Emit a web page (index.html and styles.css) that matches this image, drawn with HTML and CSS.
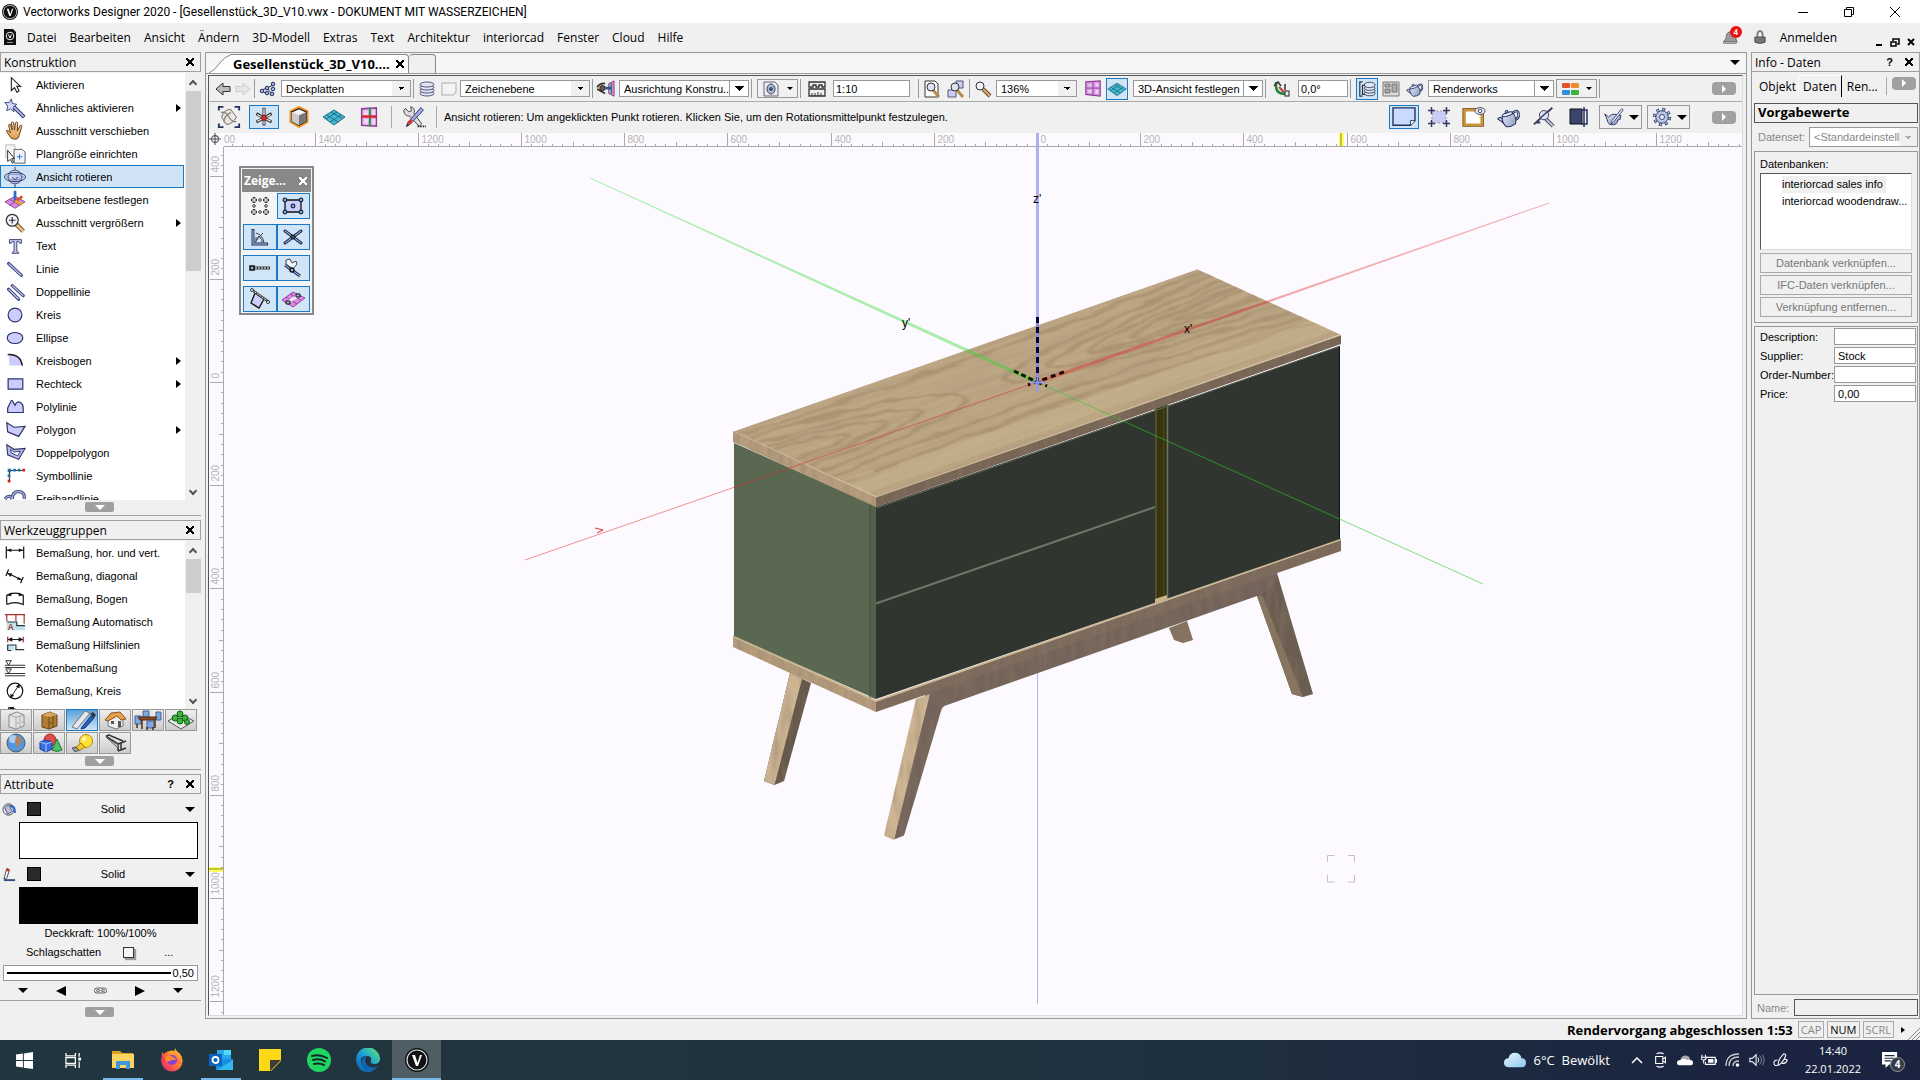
FILE: index.html
```html
<!DOCTYPE html>
<html lang="de">

	<head>
		<meta charset="UTF-8">
		<title>Vectorworks Designer 2020</title>
		<link rel="stylesheet" href="styles.css">
	</head>

	<body>

		<svg class="sprite" width="0" height="0" aria-hidden="true">
			<defs>
				<linearGradient id="gLav" x1="0" y1="0" x2="1" y2="1"><stop offset="0" stop-color="#eef" /><stop offset="1" stop-color="#a9aee0" /></linearGradient>
				<linearGradient id="gSteel" x1="0" y1="0" x2="1" y2="1"><stop offset="0" stop-color="#e2e8f8" /><stop offset="1" stop-color="#8c9ac0" /></linearGradient>
				<linearGradient id="gHand" x1="0" y1="0" x2="0" y2="1"><stop offset="0" stop-color="#fbd9a8" /><stop offset="1" stop-color="#dd9a50" /></linearGradient>
				<linearGradient id="gFox" x1="1" y1="0" x2="0" y2="1"><stop offset="0" stop-color="#ffe226" /><stop offset=".5" stop-color="#ff7139" /><stop offset="1" stop-color="#e8187c" /></linearGradient>
				<linearGradient id="gEdge" x1="0" y1="1" x2="1" y2="0"><stop offset="0" stop-color="#0c59a4" /><stop offset=".5" stop-color="#1ba0d8" /><stop offset="1" stop-color="#66eb6e" /></linearGradient>
				<linearGradient id="gCloud" x1="0" y1="0" x2="1" y2="1"><stop offset="0" stop-color="#e8f6ff" /><stop offset="1" stop-color="#8cc8ee" /></linearGradient>
			</defs>

			<!-- tool palette -->
			<symbol id="arrow" viewBox="0 0 24 24"><path d="M8 4v14l3.500-3 2.500 5 2.500-1.500-2.500-5h4z" fill="#fff" stroke="#222" stroke-width="1.200" /></symbol>
			<symbol id="wand" viewBox="0 0 24 24"><path d="M10 10l12 12" stroke="#24305e" stroke-width="4" /><path d="M10 10l11.500 11.500" stroke="#b6bdf0" stroke-width="2" /><path d="M8 2l1 5 5 1-4 3 1 5-4-3-4 2 1-5-3-4h5z" fill="#d5d8ff" stroke="#3a4478" /></symbol>
			<symbol id="hand" viewBox="0 0 24 24"><path d="M8 20l-5-7q-1-2 1-2l3 3-2-8q0-2 2-1l2 6-1-8q1-2 2.500 0l1 8 1-8q1-2 2.500 0l-.5 9 3-6q2-1 2 1l-3 10q-1 6-8.500 3z" fill="url(#gHand)" stroke="#5a3a16" /></symbol>
			<symbol id="plan" viewBox="0 0 24 24"><path d="M2 2h10v14H2z" fill="#f4f4f4" stroke="#bbb" /><path d="M11 7h9l3 3v12H11z" fill="#f0f4ff" stroke="#555" /><path d="M17 12v6M14 15h6" stroke="#1a6fd8" /><path d="M4 8v12l3-2 2 4 1.500-1-2-4h3z" fill="#fff" stroke="#222" /></symbol>
			<symbol id="orbit" viewBox="0 0 24 24"><circle cx="12" cy="12" r="7.500" fill="url(#gLav)" stroke="#3a4478" /><ellipse cx="12" cy="12" rx="11.500" ry="5" fill="none" stroke="#24305e" /><ellipse cx="12" cy="12" rx="9" ry="3" fill="none" stroke="#7d88c0" /><path d="M12 20v4M12 1v3M9 12l3 3 3-3" stroke="#24305e" fill="none" /></symbol>
			<symbol id="workplane" viewBox="0 0 24 24"><path d="M1 14l11-6 11 6-11 7z" fill="#d98be0" stroke="#8a3d94" /><path d="M6 11l11 7M17 11L6 18" stroke="#8a3d94" /><path d="M12 2v12" stroke="#2f6bc8" stroke-width="3" /><path d="M12 14l8-6" stroke="#d05a2a" stroke-width="3" /><path d="M12 13l8 4" stroke="#d8a23a" stroke-width="3" /></symbol>
			<symbol id="zoomin" viewBox="0 0 24 24"><path d="M13 13l8 8" stroke="#6b4a24" stroke-width="5" /><path d="M13 13l8 8" stroke="#e3bd86" stroke-width="3" /><circle cx="9" cy="9" r="6.500" fill="#eef0fa" stroke="#333" stroke-width="1.300" /><path d="M9 5.500v7M5.500 9h7" stroke="#333" stroke-width="1.300" /></symbol>
			<symbol id="texticon" viewBox="0 0 24 24"><path d="M6 5h13v4h-2l-1-2h-2v11l2 1v1H9v-1l2-1V7H9L8 9H6z" fill="#ccf" stroke="#333a66" /></symbol>
			<symbol id="line" viewBox="0 0 24 24"><path d="M5 6l14 13" stroke="#3f4878" stroke-width="3.500" stroke-linecap="round" /><path d="M5 6l14 13" stroke="#b4b9ee" stroke-width="1.500" /></symbol>
			<symbol id="dline" viewBox="0 0 24 24"><path d="M5 9l11 11M9 5l12 11" stroke="#3f4878" stroke-width="3.500" stroke-linecap="round" /><path d="M5 9l11 11M9 5l12 11" stroke="#b4b9ee" stroke-width="1.500" /></symbol>
			<symbol id="circle" viewBox="0 0 24 24"><circle cx="12" cy="12" r="7.500" fill="#ccf" stroke="#2c3566" stroke-width="1.300" /></symbol>
			<symbol id="ellipse" viewBox="0 0 24 24"><ellipse cx="12" cy="12" rx="8.500" ry="6" fill="#ccf" stroke="#2c3566" stroke-width="1.300" /></symbol>
			<symbol id="arc" viewBox="0 0 24 24"><path d="M5 5q13 0 15 12H6z" fill="#ccf" /><path d="M4 5q14-1 16 12" fill="none" stroke="#222" stroke-width="1.500" /></symbol>
			<symbol id="rect" viewBox="0 0 24 24"><path d="M4.500 6.500h16v11h-16z" fill="#ccf" stroke="#2c3566" stroke-width="1.300" /></symbol>
			<symbol id="polyline" viewBox="0 0 24 24"><path d="M4 18V13l4-8q1-1 2 2l2 3q2-5 6-3 3 2 3 6v5z" fill="#ccf" stroke="#2c3566" stroke-width="1.300" /></symbol>
			<symbol id="polygon" viewBox="0 0 24 24"><path d="M3 4l8 5 12-1-7 11-12-5z" fill="#ccf" stroke="#2c3566" stroke-width="1.300" /></symbol>
			<symbol id="dpolygon" viewBox="0 0 24 24"><path d="M3 3l8 5 12-1-7 12-12-5z" fill="#b4b9ee" stroke="#2c3566" stroke-width="1.200" /><path d="M7 8l4 3 7-1-3 5-7-3z" fill="#fff" stroke="#2c3566" /></symbol>
			<symbol id="symline" viewBox="0 0 24 24"><path d="M6 18V6h16" fill="none" stroke="#345" stroke-width="1.300" /><path d="M4 4h4v4H4zM10 4h3v3h-3zM15 4h3v3h-3zM4 10h3v3H4z" fill="#2a6da8" /><path d="M20 4h3v3h-3zM4 16h3v3H4z" fill="#c22" /></symbol>
			<symbol id="freehand" viewBox="0 0 24 24"><path d="M1 12q5-6 8 0M9 12q0-8 7-8t6 8" fill="none" stroke="#3f4878" stroke-width="3.500" /><path d="M1 12q5-6 8 0M9 12q0-8 7-8t6 8" fill="none" stroke="#b4b9ee" stroke-width="1.300" /></symbol>

			<!-- dimension tools -->
			<symbol id="dimh" viewBox="0 0 24 24"><path d="M2.500 5v13M21.500 5v13M3 9h18" stroke="#111" stroke-width="1.300" /><path d="M3 9l5-2v4zM21 9l-5-2v4z" fill="#111" /></symbol>
			<symbol id="dimd" viewBox="0 0 24 24"><path d="M5 5L2 12M21 13l-3 7M4 9l15 7" stroke="#111" stroke-width="1.300" /><path d="M4 9l5 0-2 4zM19 16l-5 0 2-3z" fill="#111" /></symbol>
			<symbol id="dimb" viewBox="0 0 24 24"><path d="M3 18V8q9-5 18 0v10q-9-4-18 0" fill="none" stroke="#111" stroke-width="1.300" /><path d="M3 8l5-3v4zM21 8l-5-3v4z" fill="#111" /></symbol>
			<symbol id="dima" viewBox="0 0 24 24"><path d="M3 12h11v4h9v5H3z" fill="#bfe3e8" /><path d="M1 4h22M3 4v7M13 4v7M22 4v10" stroke="#a33" stroke-width="1.300" /><path d="M3 12h11v4h9" fill="none" stroke="#234" stroke-width="1.300" /><text x="4" y="21" font-size="9" font-weight="bold" fill="#a33">A</text></symbol>
			<symbol id="dimg" viewBox="0 0 24 24"><path d="M4 12h7v6h-7z" fill="#bfe3e8" /><path d="M4 18v-6h9v5h9M4 18h4" fill="none" stroke="#234" stroke-width="1.300" /><path d="M4 3v6M21 3v6" stroke="#c33" stroke-width="1.500" /><path d="M5 6h15" stroke="#111" /><path d="M4 6l5-2.500v5zM21 6l-5-2.500v5z" fill="#111" /></symbol>
			<symbol id="dimk" viewBox="0 0 24 24"><path d="M1 9h22M1 11.500h22M1 18h22M1 20.500h22" stroke="#222" /><path d="M2 4h6L5 9zM2 13h6l-3 5z" fill="#fff" stroke="#222" /></symbol>
			<symbol id="dimc" viewBox="0 0 24 24"><circle cx="12" cy="12" r="8.500" fill="none" stroke="#111" stroke-width="1.300" /><path d="M8 18l8-12" stroke="#111" /><path d="M17 4l0 5-4-2zM7 20l0-5 4 2z" fill="#111" /></symbol>
			<symbol id="dimw" viewBox="0 0 24 24"><path d="M5 5v16M6 5q12 2 16 12" fill="none" stroke="#111" stroke-width="1.300" /><path d="M5 5l6-1-2 4z" fill="#111" /></symbol>

			<!-- tool group buttons -->
			<symbol id="cab1" viewBox="0 0 28 20"><path d="M7 5l8-3 7 3v11l-8 3-7-2z" fill="#e4e4e4" stroke="#888" /><path d="M14 7l8-2M14 7v12M7 5l7 2M18 6v12M16 12v2M20 11v2" stroke="#aaa" fill="none" /></symbol>
			<symbol id="cab2" viewBox="0 0 28 20"><path d="M7 5l8-3 7 3v11l-8 3-7-2z" fill="#b07c34" stroke="#6a4514" /><path d="M7 5l8-3 7 3-8 2z" fill="#d6a860" /><path d="M14 7v12M18 6v12M16 12v2" stroke="#6a4514" /></symbol>
			<symbol id="ruler" viewBox="0 0 28 20"><path d="M4 17L17 1l5 2L9 19z" fill="#e4e8ec" stroke="#777" /><path d="M14 17l9-11 3 2-9 10-4 1z" fill="#2d5fc0" stroke="#1a3570" /><path d="M22 4l3-2 3 3-2 3z" fill="#334" /></symbol>
			<symbol id="house" viewBox="0 0 28 20"><path d="M7 9v7l8 3 7-3V8l-7-5z" fill="#eee" stroke="#777" /><path d="M4 10l6-7 9-1 6 7-5 1-4-4-9 5z" fill="#e8a04c" stroke="#8a5520" /><path d="M17 11h3v6h-3zM10 11h3v3h-3z" fill="#555" /></symbol>
			<symbol id="table" viewBox="0 0 28 20"><path d="M9 1h6v6H9zM22 2h5v8h-5zM1 6h6v8H1zM13 11h7v7h-7z" fill="#7fa8e0" stroke="#3c64a0" /><path d="M4 7h19l-2 3H6z" fill="#8a4b28" stroke="#552a10" /><path d="M8 10v9M21 10v8M3 14v4M13 17v3M19 17v3" stroke="#552a10" stroke-width="1.500" /></symbol>
			<symbol id="garden" viewBox="0 0 28 20"><path d="M1 11l12-7 14 7-13 8z" fill="#e6e6e6" stroke="#555" /><circle cx="13" cy="4" r="3" fill="#3cb43c" stroke="#176017" /><circle cx="8" cy="8" r="3" fill="#3cb43c" stroke="#176017" /><circle cx="18" cy="8" r="3" fill="#3cb43c" stroke="#176017" /><circle cx="13" cy="11" r="3" fill="#3cb43c" stroke="#176017" /><circle cx="20" cy="12" r="2.500" fill="#3cb43c" stroke="#176017" /></symbol>
			<symbol id="globe" viewBox="0 0 28 20"><circle cx="14" cy="10" r="9" fill="#4f97df" stroke="#555" /><circle cx="11" cy="6" r="4" fill="#cfe6ff" opacity=".7" /><path d="M14 3l5 2 1 4-3 2-1 5-2-4-1-4z" fill="#b9825a" /></symbol>
			<symbol id="shapes" viewBox="0 0 28 20"><circle cx="15" cy="7" r="6" fill="#e04a4a" stroke="#a22" /><path d="M17 17l5-11 5 11q-5 3-10 0z" fill="#4ec06a" stroke="#227a38" /><path d="M5 9l6-2 6 2v7l-6 3-6-3z" fill="#3a6ee0" stroke="#1c3c94" /><path d="M5 9l6 2 6-2M11 11v8" stroke="#9cf" fill="none" /></symbol>
			<symbol id="bulb" viewBox="0 0 28 20"><circle cx="18" cy="8" r="6.500" fill="#ffe23a" stroke="#b08a10" /><path d="M13 10l4 4-6 4-4-3z" fill="#f5c828" stroke="#a07c10" /><path d="M4 15l4-1 3 3-4 2z" fill="#999" stroke="#555" /><circle cx="16" cy="6" r="2" fill="#fff9c4" /></symbol>
			<symbol id="beam" viewBox="0 0 28 20"><path d="M5 3l12 8v7M5 3l3-1 14 6M17 11l8-3M17 18l8-3M20 10v7" fill="none" stroke="#333" stroke-width="1.500" /><path d="M5 4l12 8v3z" fill="#ddd" stroke="#555" /></symbol>

			<!-- attributes -->
			<symbol id="bucket" viewBox="0 0 16 16"><circle cx="7" cy="8" r="6" fill="#e6e6f2" stroke="#445" /><path d="M9 3q6 0 6 9l-3-1q1-5-4-6z" fill="#2f6bc8" /><path d="M3 6l4-3 4 7-5 3z" fill="#b9bfe0" stroke="#556" /></symbol>
			<symbol id="pen" viewBox="0 0 16 16"><path d="M5 2l3 1-3 9-3 1z" fill="#fff" stroke="#445" /><path d="M5 1l3 1-1 3-3-1z" fill="#c33" /><path d="M2 14h12" stroke="#334a80" stroke-width="2" /></symbol>
			<symbol id="link" viewBox="0 0 16 10"><rect x=".5" y="2" width="15" height="6" rx="3" fill="#fff" stroke="#333" /><rect x="3" y="4" width="4" height="2" rx="1" fill="none" stroke="#333" /><rect x="9" y="4" width="4" height="2" rx="1" fill="none" stroke="#333" /></symbol>

			<!-- view bar -->
			<symbol id="back" viewBox="0 0 18 18"><path d="M2 9l7-6v3.500h7v5H9V15z" fill="#bbb" stroke="#333" /></symbol>
			<symbol id="fwd" viewBox="0 0 18 18"><path d="M16 9L9 3v3.500H2v5h7V15z" fill="#e6e6e6" stroke="#ccc" /></symbol>
			<symbol id="classes" viewBox="0 0 18 18"><path d="M3 10l5-2 6-3M8 8l5 6M3 11l5 3" stroke="#24305e" /><g fill="#9fb4e0" stroke="#24305e"><circle cx="3" cy="11" r="1.800" /><circle cx="8" cy="8" r="1.800" /><circle cx="14" cy="4" r="1.800" /><circle cx="14" cy="9" r="1.800" /><circle cx="13" cy="14" r="1.800" /><circle cx="8" cy="13" r="1.800" /></g></symbol>
			<symbol id="layers" viewBox="0 0 18 18"><g fill="#dfe2f4" stroke="#333a60" stroke-width=".8"><ellipse cx="9" cy="13.500" rx="7" ry="2.500" /><ellipse cx="9" cy="10.500" rx="7" ry="2.500" /><ellipse cx="9" cy="7.500" rx="7" ry="2.500" /><ellipse cx="9" cy="4.500" rx="7" ry="2.500" /></g></symbol>
			<symbol id="sheet" viewBox="0 0 18 18"><path d="M2 3h14v9l-3 3H2z" fill="#f4f4f4" stroke="#c4c4c4" stroke-width="1.500" /></symbol>
			<symbol id="eye" viewBox="0 0 22 20"><path d="M1 8q4-5 9-4M1 10l9 5" stroke="#333" stroke-width="2" fill="none" /><circle cx="7" cy="9" r="3" fill="#7a5230" stroke="#222" /><path d="M14 4l6-3v17l-6-3z" fill="#d98be0" stroke="#8a3d94" /><path d="M17 3v13" stroke="#1b9a3a" stroke-width="1.500" /><path d="M10 9h7" stroke="#2a55a8" stroke-width="3" /></symbol>
			<symbol id="savedview" viewBox="0 0 18 18"><path d="M2 2h11l3 3v11H2z" fill="#eceef4" stroke="#667" /><ellipse cx="9" cy="9" rx="4" ry="5" fill="#a9bbd8" stroke="#445" /><circle cx="9" cy="9" r="2" fill="#456" /></symbol>
			<symbol id="scale" viewBox="0 0 18 18"><path d="M1 2h16v5h-3v-2h-3v2h-3v-2h-3v2H1zM1 9h16v7H1z" fill="#eee" stroke="#333" stroke-width="1.300" /><path d="M4 13v3M7 13v3M10 12v4M13 13v3" stroke="#333" /></symbol>
			<symbol id="zoompage" viewBox="0 0 18 18"><path d="M2 1h10l3 3v13H2z" fill="#fff" stroke="#333" /><path d="M10 10l6 7" stroke="#b98a4a" stroke-width="3" /><circle cx="8" cy="7" r="4" fill="#dde4f4" stroke="#333" /></symbol>
			<symbol id="zoomobj" viewBox="0 0 18 18"><path d="M9 1h7v7H9zM1 10h8v7H1z" fill="#ccf" stroke="#556" /><path d="M10 10l6 7" stroke="#b98a4a" stroke-width="3" /><circle cx="8" cy="7" r="4" fill="#dde4f4" stroke="#333" /></symbol>
			<symbol id="glass" viewBox="0 0 18 18"><path d="M9 9l7 7" stroke="#6b4a24" stroke-width="4" /><path d="M9 9l7 7" stroke="#d9b27a" stroke-width="2" /><circle cx="6" cy="6" r="4" fill="#eef0fa" stroke="#333" /></symbol>
			<symbol id="multiview" viewBox="0 0 18 20"><path d="M1 2l16-1v17L1 16z" fill="#dba0e4" stroke="#8a3d94" stroke-width="1.300" /><path d="M9 2v15M1 9h16" stroke="#8a3d94" /><path d="M4 5h3v2H4zM12 4h3v3h-3zM4 11h3v3H4zM12 11h3v4h-3z" fill="#f0d4f5" /></symbol>
			<symbol id="plane" viewBox="0 0 24 20"><path d="M1 10l11-7 11 7-11 8z" fill="#47b6cf" stroke="#1b6f88" /><path d="M5 8l11 7M9 5l11 6M8 15l11-7M4 12l11-7" stroke="#1b6f88" /></symbol>
			<symbol id="angle" viewBox="0 0 18 18"><path d="M3 2v4q0 8 10 8" fill="none" stroke="#1b8a3a" stroke-width="2.500" /><path d="M1 6l4-4 3 4" fill="none" stroke="#333" stroke-width="1.500" /><path d="M6 7l5 5" stroke="#c33" stroke-width="2" /><path d="M12 4v6" stroke="#333" stroke-width="1.500" /><rect x="12" y="11" width="4" height="5" fill="#eee" stroke="#222" /></symbol>
			<symbol id="stack" viewBox="0 0 20 20"><path d="M5 2H2v16h3M8 6H5v10h3" fill="none" stroke="#234" stroke-width="1.300" /><g fill="#dfe6f8" stroke="#234" stroke-width=".9"><ellipse cx="13" cy="15" rx="6" ry="2.500" /><ellipse cx="13" cy="12" rx="6" ry="2.500" /><ellipse cx="13" cy="9" rx="6" ry="2.500" /><ellipse cx="13" cy="5.500" rx="6" ry="3" /></g></symbol>
			<symbol id="panes" viewBox="0 0 18 18"><path d="M1 2h16v14H1z" fill="#ddd" stroke="#777" /><path d="M3 4h5v3H3zM3 9h5v4H3zM10 4h5v8h-5z" fill="#aaa" stroke="#777" /></symbol>
			<symbol id="teapot" viewBox="0 0 28 26"><g transform="rotate(-18 14 14)" stroke="#24305e" stroke-width="1.200"><path d="M20 10q7-3 6 3t-7 5" fill="none" stroke-width="3" /><path d="M20 10q7-3 6 3t-7 5" fill="none" stroke="#b9c6e4" stroke-width="1" /><path d="M7 19L1 11l3-1 4 4z" fill="#c9d4ee" /><path d="M7 10q6-2 13 0 3 7-1 13-6 2-11 0-4-6-1-13z" fill="url(#gSteel)" /><ellipse cx="13.500" cy="9.500" rx="6.500" ry="2" fill="#e6ebfa" /><circle cx="13.500" cy="6.500" r="1.500" fill="#c9d4ee" /></g></symbol>
			<symbol id="swatches" viewBox="0 0 18 18"><rect x="1" y="3" width="8" height="5" rx="1" fill="#e6502a" /><rect x="10" y="3" width="8" height="5" rx="1" fill="#f08a28" /><rect x="1" y="10" width="8" height="5" rx="1" fill="#2f8fe0" /><rect x="10" y="10" width="8" height="5" rx="1" fill="#3cb43c" /></symbol>

			<!-- mode bar -->
			<symbol id="rotview" viewBox="0 0 26 26"><path d="M2 6V2h5M19 2h5v4M2 20v4h5M19 24h5v-4" fill="none" stroke="#24305e" stroke-width="2" /><path d="M5 13q3-9 10-8l6 8q-4 8-11 8z" fill="#ece8dc" stroke="#666" /><path d="M4 8q6-1 9 5t8 5M7 18q2-7 8-10" fill="none" stroke="#888" stroke-width="1.500" /></symbol>
			<symbol id="rotpoint" viewBox="0 0 26 26"><path d="M13 2v21M4 19l9-5 9 5M4 9l9 5 9-5" stroke="#333" stroke-width="3.500" fill="none" /><path d="M13 3v19M5 18l8-4 8 4M5 10l8 4 8-4" stroke="#eee" stroke-width="1.500" fill="none" /><circle cx="13" cy="14" r="3" fill="#d33" stroke="#611" /></symbol>
			<symbol id="cube" viewBox="0 0 26 26"><path d="M13 3l8.500 4v11L13 23l-8.500-5V7z" fill="#fff" stroke="#f0901e" stroke-width="3.500" /><path d="M13 4l8 3.500v10L13 22l-8-4.500v-10z" fill="#f4f4f4" stroke="#222" stroke-width="1.200" /><path d="M13 11v11l8-4.500v-10z" fill="#777" /><path d="M5 7.500l8 3.500v11l-8-4.500z" fill="#ccc" /></symbol>
			<symbol id="grid" viewBox="0 0 26 26"><path d="M5 4l16-1v20l-16-1z" fill="#dba0e4" stroke="#8a3d94" stroke-width="1.500" /><path d="M7 6h5v5H7zM16 5h4v6h-4zM7 15h5v6H7zM16 15h4v6h-4z" fill="#f0d4f5" /><path d="M14 3v20" stroke="#1b9a3a" stroke-width="2" /><path d="M5 12.500h16" stroke="#e02020" stroke-width="2.500" /></symbol>
			<symbol id="prefs" viewBox="0 0 28 26"><path d="M4 3l4 4 3-1-1-5q6 1 4 8l9 12-3 3L9 12q-6 0-7-6z" fill="#ddd" stroke="#333" /><path d="M22 2l3 3L10 21l-5 3 2-5z" fill="#9fa4e0" stroke="#24305e" /><path d="M10 15l3 3-4 4-3-2z" fill="#d33" /><path d="M5 24l2-3 1 2z" fill="#111" /><path d="M18 24h10" stroke="#333" stroke-width="2" stroke-dasharray="2 1" /></symbol>
			<symbol id="page" viewBox="0 0 26 24"><path d="M1 2h24v14l-5 5H1z" fill="#ccd9ff" stroke="#24305e" stroke-width="1.500" /><path d="M25 16h-5v5" fill="#fff" stroke="#24305e" /></symbol>
			<symbol id="handles" viewBox="0 0 24 24"><path d="M5 6h14v12H5z" fill="#ccccf2" stroke="#99a" stroke-dasharray="2 2" /><path d="M4.500 2v7M1 5.500h7M19.500 2v7M16 5.500h7M4.500 15v7M1 18.500h7M19.500 15v7M16 18.500h7" stroke="#333a60" stroke-width="1.500" /></symbol>
			<symbol id="frame" viewBox="0 0 28 24"><path d="M3 4h20v17H3z" fill="#fff" stroke="#7a5010" stroke-width="5" /><path d="M3 4h20v17H3z" fill="#fff" stroke="#c8953c" stroke-width="3" /><ellipse cx="21" cy="5" rx="6" ry="4" fill="#dde4f8" stroke="#445" /><circle cx="21" cy="5" r="2" fill="#fff" stroke="#334" /></symbol>
			<symbol id="xray" viewBox="0 0 26 24"><path d="M2 20L22 2M4 18h5" stroke="#333a60" stroke-width="2" /><path d="M15 14l8 8" stroke="#333a60" stroke-width="4" /><path d="M15 14l8 8" stroke="#ccd" stroke-width="2" /><circle cx="13" cy="10" r="5" fill="#dfe4f4" stroke="#333a60" /><path d="M9 13l8-7" stroke="#333a60" stroke-width="1.500" /></symbol>
			<symbol id="clip" viewBox="0 0 22 24"><path d="M2 4h12v15H2z" fill="#3a4470" stroke="#111" /><path d="M16 2v20M13 5h6v14h-6" fill="none" stroke="#24305e" stroke-width="1.500" /></symbol>
			<symbol id="pencilpot" viewBox="0 0 28 26"><path d="M2 9l5 4q4-5 11-3l5 1-1 5-3 1q-1 6-6 6-7 1-8-7z" fill="url(#gSteel)" stroke="#24305e" stroke-width="1.200" /><path d="M24 2l2 2L13 20l-3 2 1-4z" fill="#dfe4f4" stroke="#24305e" /></symbol>
			<symbol id="gear" viewBox="0 0 24 24"><circle cx="12" cy="12" r="9" fill="none" stroke="#24305e" stroke-width="4" stroke-dasharray="3.500 3.570" /><circle cx="12" cy="12" r="9" fill="none" stroke="#b9c6e4" stroke-width="2.500" stroke-dasharray="2 5.070" stroke-dashoffset="-.7" /><circle cx="12" cy="12" r="7.500" fill="#b9c6e4" stroke="#24305e" /><circle cx="12" cy="12" r="3" fill="#eef" stroke="#24305e" /></symbol>

			<!-- snapping -->
			<symbol id="snapgrid" viewBox="0 0 24 24"><g fill="#fff" stroke="#333"><path d="M6 3v6M3 6h6M18 3v6M15 6h6M6 15v6M3 18h6M18 15v6M15 18h6" stroke-width="2.500" /><circle cx="12" cy="6" r="1.300" /><circle cx="12" cy="18" r="1.300" /><circle cx="6" cy="12" r="1.300" /><circle cx="18" cy="12" r="1.300" /></g><path d="M6 4v4M4 6h4M18 4v4M16 6h4M6 16v4M4 18h4M18 16v4M16 18h4" stroke="#fff" /></symbol>
			<symbol id="snapobj" viewBox="0 0 24 24"><path d="M4 6h16v12H4z" fill="#ccf" stroke="#111" stroke-width="1.300" /><g fill="#9fb4d0" stroke="#12304e" stroke-width="1.300"><circle cx="4" cy="6" r="1.800" /><circle cx="20" cy="6" r="1.800" /><circle cx="4" cy="18" r="1.800" /><circle cx="20" cy="18" r="1.800" /><circle cx="12" cy="12" r="1.800" /></g></symbol>
			<symbol id="snapangle" viewBox="0 0 24 24"><path d="M5 4v15h15" fill="none" stroke="#24305e" stroke-width="3" /><path d="M5 5v14h14" fill="none" stroke="#b4c4e8" /><path d="M6 18l9-10M8 8q7 2 8 10M8 15l3-4 3 4v3M8 12v5" fill="none" stroke="#445" /></symbol>
			<symbol id="snapcross" viewBox="0 0 24 24"><path d="M4 6l16 12M20 6L4 18" stroke="#24305e" stroke-width="3" stroke-linecap="round" /><path d="M4 6l16 12M20 6L4 18" stroke="#b4c4e8" /><circle cx="12" cy="12" r="2" fill="#456" stroke="#111" /></symbol>
			<symbol id="snapdist" viewBox="0 0 24 24"><path d="M6 12h16" stroke="#333" stroke-width="3" /><path d="M7 12h14" stroke="#fff" stroke-dasharray="2 1" /><rect x="2" y="10" width="4" height="4" fill="#9fb4d0" stroke="#111" stroke-width="1.500" /></symbol>
			<symbol id="snapedge" viewBox="0 0 24 24"><path d="M4 9l15 11" stroke="#24305e" stroke-width="3" /><path d="M4 9l15 11" stroke="#b4c4e8" /><path d="M5 4l4-1 2 4 4-2 1 3-4 5-7-5z" fill="#eef4fa" stroke="#444" /><circle cx="11" cy="14" r="2" fill="#9fb4d0" stroke="#111" stroke-width="1.300" /></symbol>
			<symbol id="snaptan" viewBox="0 0 24 24"><path d="M7 6l9 6-5 9-8-5z" fill="#ccf" stroke="#111" stroke-width="1.300" /><path d="M4 3l17 12" stroke="#333" stroke-width="2.500" /><path d="M4 3l17 12" stroke="#eee" stroke-dasharray="2 1" /><circle cx="4" cy="3" r="1.500" fill="#fff" stroke="#333" /><circle cx="20" cy="15" r="1.500" fill="#fff" stroke="#333" /></symbol>
			<symbol id="snapplane" viewBox="0 0 24 24"><path d="M1 13l11-8 12 6-12 9z" fill="#d98be0" stroke="#a03dac" /><path d="M5 10l11 7M9 7l11 6M6 17l12-9" stroke="#a03dac" /><path d="M7 15l10-6" stroke="#eee" stroke-width="3" /><path d="M5 14h4v3H5zM15 7h4v3h-4z" fill="#9fb4d0" stroke="#111" /></symbol>

			<!-- brand and taskbar -->
			<symbol id="vw" viewBox="0 0 24 24"><circle cx="12" cy="12" r="12" fill="#111" /><circle cx="12" cy="12" r="10" fill="none" stroke="#ddd" stroke-width="1.200" /><path d="M7 7h3l2.500 8L15 7h2l-4 11h-2z" fill="#fff" /></symbol>
			<symbol id="vwdoc" viewBox="0 0 12 16"><path d="M0 0h9l3 3v13H0z" fill="#111" /><circle cx="6" cy="7" r="3.800" fill="none" stroke="#eee" /><path d="M4.500 5.500L6 9l1.500-3.500" fill="none" stroke="#fff" /><path d="M3 13.500h6" stroke="#999" /></symbol>
			<symbol id="bell" viewBox="0 0 20 20"><path d="M3 15q3-2 3-7 1-4 5-4t5 4q0 5 2 7z" fill="#999" stroke="#666" /><path d="M3 15h14v2H3z" fill="#bbb" stroke="#777" /></symbol>
			<symbol id="lock" viewBox="0 0 14 16"><path d="M4 8V5q0-4 3-4t3 4v3" fill="none" stroke="#777" stroke-width="2" /><path d="M1 8h12v6q-6 3-12 0z" fill="#777" stroke="#444" /></symbol>
			<symbol id="win" viewBox="0 0 16 16"><path d="M0 2.300l6.500-.9v6.100H0zM7.400 1.300L16 0v7.500H7.400zM0 8.400h6.500v6.200L0 13.700zM7.400 8.400H16V16l-8.600-1.200z" fill="#fff" /></symbol>
			<symbol id="taskview" viewBox="0 0 18 16"><path d="M1 0v3h10V0M1 16v-3h10v3M1 5h10v6H1zM15 0v4M15 9v7" fill="none" stroke="#fff" stroke-width="1.300" /><path d="M14 5h3v3h-3z" fill="#fff" /></symbol>
			<symbol id="explorer" viewBox="0 0 24 24"><path d="M1 3h8l2 2h11v4H1z" fill="#e0a020" /><path d="M1 6h22v14H1z" fill="#fcd462" /><path d="M5 13h14v8h-4v-4H9v4H5z" fill="#3f96d8" /></symbol>
			<symbol id="firefox" viewBox="0 0 24 24"><circle cx="12" cy="13" r="10.500" fill="url(#gFox)" /><path d="M15 0q1 3 5 6 4 6 1 11l-8-4zM2 4l3 3 4-2-4 8-4 2z" fill="url(#gFox)" /><circle cx="12" cy="12" r="5" fill="#8a3fd8" /><path d="M5 9q4-3 8 0 3 1 3 3-4-1-6 1l-4 1z" fill="#ff8a2c" /></symbol>
			<symbol id="outlook" viewBox="0 0 24 24"><path d="M8 2h14v10H8z" fill="#28a8ea" /><path d="M15 2h7v5h-7z" fill="#50d9ff" /><path d="M7 11h17v11H7z" fill="#1490df" /><path d="M24 12v10L8 22z" fill="#35b8f1" /><path d="M0 6h13v12H0z" fill="#0a64c0" /><circle cx="6.500" cy="12" r="3" fill="none" stroke="#fff" stroke-width="1.800" /></symbol>
			<symbol id="notes" viewBox="0 0 24 24"><path d="M1 1h22v12L13 23H1z" fill="#fdd816" /><path d="M12 12h11L12 23z" fill="#3c3c3c" /></symbol>
			<symbol id="spotify" viewBox="0 0 24 24"><circle cx="12" cy="12" r="12" fill="#1ed760" /><path d="M5 8q8-2 15 2M6 12q7-2 12 1.500M7 16q5-1.500 10 1" fill="none" stroke="#16262c" stroke-width="2" stroke-linecap="round" /></symbol>
			<symbol id="edge" viewBox="0 0 24 24"><path d="M0 12A12 12 0 0 1 24 11q0 5-6 5-4 0-3-3 1-5-4-5-9 0-5 9 3 6 11 6-15 4-17-11z" fill="url(#gEdge)" /><path d="M6 17Q4 9 11 8q-4 5 1 10 5 3 10-.5Q18 24 12 24q-5-1-6-7z" fill="#1164b4" /></symbol>
			<symbol id="cloudw" viewBox="0 0 24 18"><path d="M6 17q-6 0-6-5t5-5q1-6 7-6 6 0 7 6 5 0 5 5t-5 5z" fill="url(#gCloud)" /></symbol>
			<symbol id="meet" viewBox="0 0 16 18"><path d="M2 5h8v8H2zM10 8l3-2v6l-3-2M3 2q4-2 8 0M3 16q4 2 8 0" fill="none" stroke="#fff" stroke-width="1.200" /></symbol>
			<symbol id="onedrive" viewBox="0 0 18 12"><path d="M4 9q-1-7 5-8 5 0 6 5" fill="#aaa" /><path d="M4 12q-4 0-4-3t4-3q4-3 7 0 7-1 7 3 0 3-3 3z" fill="#fff" /></symbol>
			<symbol id="battery" viewBox="0 0 18 14"><path d="M6 4h10v8H5v-3" fill="none" stroke="#fff" stroke-width="1.300" /><path d="M8 6h6v4H8zM16 6h2v4h-2z" fill="#fff" /><path d="M1 1v3M5 1v3M0 4h6q0 3-3 3t-3-3M3 7v4" fill="none" stroke="#fff" stroke-width="1.200" /></symbol>
			<symbol id="wifi" viewBox="0 0 16 16"><path d="M1 14Q1 2 14 2M4 14q0-9 10-9M8 14q0-5 6-5" fill="none" stroke="#ccc" stroke-width="1.300" /><circle cx="12.500" cy="13" r="1.800" fill="#fff" /></symbol>
			<symbol id="sound" viewBox="0 0 18 16"><path d="M1 6h3l4-4v12l-4-4H1z" fill="none" stroke="#fff" stroke-width="1.200" /><path d="M10 5q2 3 0 6" fill="none" stroke="#fff" /><path d="M12 3q4 5 0 10M15 2q4 6 0 12" fill="none" stroke="#8a92a6" /></symbol>
			<symbol id="ink" viewBox="0 0 18 18"><path d="M6 15q-1-6 6-13 3 0 2 3-3 7-8 10zM1 12q0 4 4 3M5 9q-4 0-4 4M10 13q5 0 6-4l-3-1" fill="none" stroke="#fff" stroke-width="1.200" /></symbol>
			<symbol id="note" viewBox="0 0 18 18"><path d="M0 0h17v14H8l-4 4v-4H0z" fill="#fff" /><path d="M3 4h11M3 7h11M3 10h7" stroke="#1b2640" stroke-width="1.300" /></symbol>
			<symbol id="target" viewBox="0 0 14 14"><circle cx="7" cy="7" r="4" fill="none" stroke="#555" stroke-width="1.300" /><path d="M7 0v14M0 7h14" stroke="#555" stroke-width="1.300" /></symbol>
		</svg>

		<header class="titlebar">
			<svg class="logo"><use href="#vw" /></svg>
			<h1>Vectorworks Designer 2020 - [Gesellenstück_3D_V10.vwx - DOKUMENT MIT WASSERZEICHEN]</h1>
			<div class="winbtns">
				<button aria-label="Minimieren"><svg viewBox="0 0 12 12"><path d="M1 6.500h10" stroke="#000" /></svg></button>
				<button aria-label="Wiederherstellen"><svg viewBox="0 0 12 12"><path d="M1.500 3.500h7v7h-7zM3.500 3V1.500h7v7H9" fill="none" stroke="#000" /></svg></button>
				<button aria-label="Schließen"><svg viewBox="0 0 12 12"><path d="M1 1l10 10M11 1L1 11" stroke="#000" /></svg></button>
			</div>
		</header>

		<nav class="menubar">
			<svg class="doc"><use href="#vwdoc" /></svg>
			<a href="#">Datei</a>
			<a href="#">Bearbeiten</a>
			<a href="#">Ansicht</a>
			<a href="#">Ändern</a>
			<a href="#">3D-Modell</a>
			<a href="#">Extras</a>
			<a href="#">Text</a>
			<a href="#">Architektur</a>
			<a href="#">interiorcad</a>
			<a href="#">Fenster</a>
			<a href="#">Cloud</a>
			<a href="#">Hilfe</a>
			<div class="account">
				<span class="bell"><svg><use href="#bell" /></svg><b>4</b></span>
				<svg class="lock"><use href="#lock" /></svg>
				<a href="#">Anmelden</a>
			</div>
			<div class="docbtns">
				<button aria-label="Dokument minimieren"><svg viewBox="0 0 10 10"><path d="M2 8h6" stroke="#000" stroke-width="2" /></svg></button>
				<button aria-label="Dokument wiederherstellen"><svg viewBox="0 0 10 10"><path d="M1 5h5v4H1zM3 4V2h6v5H7" fill="none" stroke="#000" stroke-width="1.500" /></svg></button>
				<button aria-label="Dokument schließen"><svg viewBox="0 0 10 10"><path d="M2 2l6 6M8 2L2 8" stroke="#000" stroke-width="2" /></svg></button>
			</div>
		</nav>

		<main class="workspace">

			<aside class="dock">
				<section class="palette grow">
					<h2>Konstruktion <button class="close" aria-label="Schließen"></button></h2>
					<div class="listbox">
						<ul>
							<li><button><svg><use href="#arrow" /></svg>Aktivieren</button></li>
							<li><button class="more"><svg><use href="#wand" /></svg>Ähnliches aktivieren</button></li>
							<li><button><svg><use href="#hand" /></svg>Ausschnitt verschieben</button></li>
							<li><button><svg><use href="#plan" /></svg>Plangröße einrichten</button></li>
							<li><button class="active"><svg><use href="#orbit" /></svg>Ansicht rotieren</button></li>
							<li><button><svg><use href="#workplane" /></svg>Arbeitsebene festlegen</button></li>
							<li><button class="more"><svg><use href="#zoomin" /></svg>Ausschnitt vergrößern</button></li>
							<li><button><svg><use href="#texticon" /></svg>Text</button></li>
							<li><button><svg><use href="#line" /></svg>Linie</button></li>
							<li><button><svg><use href="#dline" /></svg>Doppellinie</button></li>
							<li><button><svg><use href="#circle" /></svg>Kreis</button></li>
							<li><button><svg><use href="#ellipse" /></svg>Ellipse</button></li>
							<li><button class="more"><svg><use href="#arc" /></svg>Kreisbogen</button></li>
							<li><button class="more"><svg><use href="#rect" /></svg>Rechteck</button></li>
							<li><button><svg><use href="#polyline" /></svg>Polylinie</button></li>
							<li><button class="more"><svg><use href="#polygon" /></svg>Polygon</button></li>
							<li><button><svg><use href="#dpolygon" /></svg>Doppelpolygon</button></li>
							<li><button><svg><use href="#symline" /></svg>Symbollinie</button></li>
							<li><button><svg><use href="#freehand" /></svg>Freihandlinie</button></li>
						</ul>
						<div class="scroll"><i class="up"></i><i class="thumb long"></i><i class="down"></i></div>
					</div>
					<button class="fold" aria-label="Einklappen"></button>
				</section>

				<section class="palette">
					<h2>Werkzeuggruppen <button class="close" aria-label="Schließen"></button></h2>
					<div class="listbox short">
						<ul>
							<li><button><svg><use href="#dimh" /></svg>Bemaßung, hor. und vert.</button></li>
							<li><button><svg><use href="#dimd" /></svg>Bemaßung, diagonal</button></li>
							<li><button><svg><use href="#dimb" /></svg>Bemaßung, Bogen</button></li>
							<li><button><svg><use href="#dima" /></svg>Bemaßung Automatisch</button></li>
							<li><button><svg><use href="#dimg" /></svg>Bemaßung Hilfslinien</button></li>
							<li><button><svg><use href="#dimk" /></svg>Kotenbemaßung</button></li>
							<li><button><svg><use href="#dimc" /></svg>Bemaßung, Kreis</button></li>
							<li><button><svg><use href="#dimw" /></svg>Bemaßung, Winkel</button></li>
						</ul>
						<div class="scroll"><i class="up"></i><i class="thumb"></i><i class="down"></i></div>
					</div>
					<div class="groups">
						<button aria-label="Korpus"><svg><use href="#cab1" /></svg></button>
						<button aria-label="Möbel"><svg><use href="#cab2" /></svg></button>
						<button class="active" aria-label="Bemaßung"><svg><use href="#ruler" /></svg></button>
						<button aria-label="Architektur"><svg><use href="#house" /></svg></button>
						<button aria-label="Einrichtung"><svg><use href="#table" /></svg></button>
						<button aria-label="Landschaft"><svg><use href="#garden" /></svg></button>
						<button aria-label="GIS"><svg><use href="#globe" /></svg></button>
						<button aria-label="Modellieren"><svg><use href="#shapes" /></svg></button>
						<button aria-label="Licht"><svg><use href="#bulb" /></svg></button>
						<button aria-label="Profile"><svg><use href="#beam" /></svg></button>
					</div>
					<button class="fold" aria-label="Einklappen"></button>
				</section>

				<section class="palette attributes">
					<h2>Attribute <button class="help" aria-label="Hilfe">?</button><button class="close" aria-label="Schließen"></button></h2>
					<button class="attr"><svg><use href="#bucket" /></svg><i class="swatch"></i><span>Solid</span></button>
					<div class="fill white"></div>
					<button class="attr"><svg><use href="#pen" /></svg><i class="swatch"></i><span>Solid</span></button>
					<div class="fill black"></div>
					<p class="opacity">Deckkraft: 100%/100%</p>
					<p class="shadow">Schlagschatten <input type="checkbox" aria-label="Schlagschatten"> <span>...</span></p>
					<button class="weight"><i></i>0,50</button>
					<div class="ends">
						<i class="tri"></i><i class="tri left"></i><svg><use href="#link" /></svg><i class="tri right"></i><i class="tri"></i>
					</div>
					<button class="fold" aria-label="Einklappen"></button>
				</section>
			</aside>

			<section class="document">
				<div class="tabs">
					<svg class="slant" viewBox="0 0 24 19"><path d="M0 19Q5 17 10 10T22 .5h2V19z" fill="#fff" /><path d="M0 19Q5 17 10 10T22 .5h2" fill="none" stroke="#888" /></svg>
					<a class="tab" href="#">Gesellenstück_3D_V10.... <i class="x"></i></a>
					<a class="tab empty" href="#" aria-label="Neues Dokument"></a>
					<i class="tri"></i>
				</div>

				<div class="sheet">
					<div class="viewbar">
						<button class="b18" aria-label="Zurück"><svg><use href="#back" /></svg></button>
						<button class="b18" aria-label="Vor"><svg><use href="#fwd" /></svg></button>
						<i class="sep"></i>
						<button class="b22" aria-label="Klassen"><svg><use href="#classes" /></svg></button>
						<span class="combo soft"><select aria-label="Klasse"><option>Deckplatten</option></select></span>
						<i class="sep"></i>
						<button class="b22" aria-label="Ebenen"><svg><use href="#layers" /></svg></button>
						<button class="b18" aria-label="Layout"><svg><use href="#sheet" /></svg></button>
						<span class="combo soft"><select aria-label="Ebene"><option>Zeichenebene</option></select></span>
						<i class="sep"></i>
						<button class="b22 full" aria-label="Ausrichtung"><svg><use href="#eye" /></svg></button>
						<span class="combo"><select aria-label="Arbeitsebene"><option>Ausrichtung Konstru...</option></select></span>
						<i class="sep"></i>
						<button class="split soft gapped" aria-label="Darstellungen"><svg><use href="#savedview" /></svg></button>
						<i class="sep"></i>
						<button class="b28" aria-label="Maßstab"><svg><use href="#scale" /></svg></button>
						<input class="scale" aria-label="Maßstab" value="1:10">
						<i class="sep spaced"></i>
						<button class="b22" aria-label="Seite zoomen"><svg><use href="#zoompage" /></svg></button>
						<button class="b22" aria-label="Objekte zoomen"><svg><use href="#zoomobj" /></svg></button>
						<i class="sep"></i>
						<button class="b22" aria-label="Zoom"><svg><use href="#glass" /></svg></button>
						<span class="combo soft zoom"><select aria-label="Zoomfaktor"><option>136%</option></select></span>
						<button class="b22 full gapped" aria-label="Mehrere Ansichten"><svg><use href="#multiview" /></svg></button>
						<button class="b22 full active" aria-label="Arbeitsebene"><svg><use href="#plane" /></svg></button>
						<span class="combo gapped"><select aria-label="Ansicht"><option>3D-Ansicht festlegen</option></select></span>
						<i class="sep"></i>
						<button class="b28" aria-label="Winkel"><svg><use href="#angle" /></svg></button>
						<input class="angle" aria-label="Winkel" value="0,0°">
						<i class="sep"></i>
						<button class="b22 full active gapped" aria-label="Ebenen sichtbar"><svg><use href="#stack" /></svg></button>
						<button class="b22" aria-label="Fenster"><svg><use href="#panes" /></svg></button>
						<button class="b22" aria-label="Rendern"><svg><use href="#teapot" /></svg></button>
						<span class="combo render"><select aria-label="Renderart"><option>Renderworks</option></select></span>
						<button class="split soft" aria-label="Farben"><svg><use href="#swatches" /></svg></button>
						<i class="sep"></i>
						<button class="pill" aria-label="Mehr"></button>
					</div>

					<div class="modebar">
						<button aria-label="Objektmitte"><svg><use href="#rotview" /></svg></button>
						<button class="active" aria-label="Punkt"><svg><use href="#rotpoint" /></svg></button>
						<button aria-label="Objekt"><svg><use href="#cube" /></svg></button>
						<button aria-label="Ebene"><svg><use href="#plane" /></svg></button>
						<button aria-label="Raster"><svg><use href="#grid" /></svg></button>
						<i class="sep"></i>
						<button aria-label="Einstellungen"><svg><use href="#prefs" /></svg></button>
						<i class="sep"></i>
						<p>Ansicht rotieren: Um angeklickten Punkt rotieren. Klicken Sie, um den Rotationsmittelpunkt festzulegen.</p>
						<button class="active" aria-label="Plan"><svg><use href="#page" /></svg></button>
						<button aria-label="Griffe"><svg><use href="#handles" /></svg></button>
						<button aria-label="Bildausschnitt"><svg><use href="#frame" /></svg></button>
						<button aria-label="Rendern"><svg><use href="#teapot" /></svg></button>
						<button aria-label="Röntgen"><svg><use href="#xray" /></svg></button>
						<button aria-label="Schnittbox"><svg><use href="#clip" /></svg></button>
						<button class="split" aria-label="Renderstil"><svg><use href="#pencilpot" /></svg></button>
						<button class="split" aria-label="Optionen"><svg><use href="#gear" /></svg></button>
						<button class="pill" aria-label="Mehr"></button>
					</div>

					<div class="drawing">
						<svg class="corner"><use href="#target" /></svg>
						<svg class="hruler" id="hruler"></svg>
						<svg class="vruler" id="vruler"></svg>

						<div class="canvas">
							<svg class="model" font-size="12">
								<defs>
									<filter id="grain" x="0" y="0" width="1" height="1">
										<feTurbulence type="fractalNoise" baseFrequency=".012 .16" numOctaves="4" seed="8" />
										<feColorMatrix values="0 0 0 0 .4  0 0 0 0 .3  0 0 0 0 .2  1.600 0 0 0 -.58" />
									</filter>
									<filter id="wobble">
										<feTurbulence type="fractalNoise" baseFrequency=".03 .09" numOctaves="2" seed="3" />
										<feDisplacementMap in="SourceGraphic" scale="12" />
										<feGaussianBlur stdDeviation=".8" />
									</filter>
									<filter id="fibre" x="0" y="0" width="1" height="1">
										<feTurbulence type="fractalNoise" baseFrequency=".14 .03" numOctaves="2" seed="5" result="n" />
										<feColorMatrix in="n" values="0 0 0 0 .25  0 0 0 0 .19  0 0 0 0 .14  .9 0 0 0 -.34" result="c" />
										<feComposite in="c" in2="SourceAlpha" operator="in" result="g" />
										<feMerge><feMergeNode in="SourceGraphic" /><feMergeNode in="g" /></feMerge>
									</filter>
									<clipPath id="top"><path d="M0 0h464v143H0z" /></clipPath>
								</defs>

								<g transform="translate(-224 -147)">
									<!-- vertical axis below the sideboard -->
									<path d="M1037.500 382v622" stroke="#b4b4f0" />

									<!-- legs -->
									<g filter="url(#fibre)">
										<path d="M1169 628l18-7 6 19-10 3-9-3z" fill="#85725e" />
										<path d="M790 673l21 10-27 98-9.500 4-10.500-4z" fill="#66584b" />
										<path d="M790 673l12 6-27.500 106-10.500-4z" fill="#cdb593" />
										<path d="M1250 580l27-7 36 121-10 3-11-3-35-98z" fill="#6b5d51" />
										<path d="M1257 596l5-1 41 102-11-3z" fill="#86745f" />
									</g>
									<!-- frame beam with front left leg -->
									<g filter="url(#fibre)">
										<path d="M926 690l351-126v14q-2 10-20 18L947 705q-5 1-6 6l-37 124.500-10 4z" fill="#73645a" />
										<path d="M916 699l14-5-36 146-10-4.500z" fill="#cdb593" />
									</g>
									<!-- base plate -->
									<g filter="url(#fibre)">
										<path d="M733 636l143 65v11l-143-65z" fill="#b49c7c" />
										<path d="M876 701l465-161v11L876 712z" fill="#7c6b5b" />
									</g>
									<path d="M733 636l143 65 465-162" fill="none" stroke="#cdb894" stroke-width="2" />

									<!-- carcass -->
									<path d="M734 443l142 63v193l-142-63z" fill="#5b6851" />
									<path d="M870 504v194" stroke="#3f4a3a" />
									<path d="M871 504l5 3v192l-5-2z" fill="#53604a" />
									<path d="M876 507l464-161v193L876 699z" fill="#30362f" />
									<path d="M876 603.500L1155 507" stroke="#6c7866" stroke-width="2" />
									<path d="M1155 408l12.500-4v193l-12.500 5z" fill="#38340f" />
									<path d="M1156 408v194" stroke="#6b6a40" />
									<path d="M1163.500 405v190" stroke="#4c4718" />
									<path d="M1155 599l12-4v4l-12 4z" fill="#cdb48d" />
									<path d="M1167.500 404v194" stroke="#6c7866" stroke-width="1.500" />
									<path d="M1339.500 346v193" stroke="#111" />
									<path d="M877 508l463-162" stroke="#5d6355" />

									<!-- top board -->
									<g filter="url(#fibre)">
										<path d="M733 431l143 66v10l-143-65z" fill="#b59d7d" />
										<path d="M876 497l465-162v9L876 507z" fill="#776555" />
									</g>
									<g transform="matrix(1 -.3496 -1 -.457 876.500 496.800)" clip-path="url(#top)">
										<path d="M0 0h464v143H0z" fill="#bea784" />
										<g filter="url(#wobble)" fill="none" stroke="#86694a" stroke-width="4" opacity=".3">
											<path d="M0 118Q110 108 130 92T0 66" />
											<path d="M0 110Q80 104 96 92T0 74" />
											<path d="M0 104Q50 98 60 91T0 82" />
											<path d="M0 128Q150 118 172 92T0 56" />
											<path d="M464 128Q250 110 220 92T464 50" />
											<path d="M464 118Q290 106 262 90T464 62" />
											<path d="M464 110Q330 102 304 90T464 72" />
											<path d="M464 103Q370 98 346 89T464 80" />
											<path d="M464 97Q400 93 388 89T464 85" />
											<path d="M0 44Q200 62 464 38M0 30Q220 44 464 26M0 136Q220 124 464 138" />
										</g>
										<rect width="464" height="143" filter="url(#grain)" opacity=".6" />
										<path d="M0 20h464" stroke="#d2c09c" stroke-width="22" opacity=".3" />
									</g>
									<path d="M733 431l143 66 465-162" fill="none" stroke="#c9b592" />

									<!-- axes -->
									<path d="M525 560L1037 382" stroke="#e02828" opacity=".5" />
									<path d="M1037 381L1497 221 1549 203 1037 384z" fill="#e02828" stroke="#e02828" stroke-width=".6" opacity=".4" />
									<path d="M1037 382L1483 584" stroke="#2bc82b" opacity=".6" />
									<path d="M1037 380.500L650 205 590 178 1037 384z" fill="#2bd82b" stroke="#2bd82b" stroke-width=".6" opacity=".4" />
									<path d="M1037.500 147v172" stroke="#b0b0f2" stroke-width="3" />
									<path d="M1037.500 319v66" stroke="#8a8ad0" stroke-width="3" />
									<path d="M1037.500 317v66" stroke="#000038" stroke-width="3" stroke-dasharray="6 4" />
									<path d="M1014 371l23 11" stroke="#031a03" stroke-width="3" stroke-dasharray="5 3" />
									<path d="M1064 372l-36 13M1037 382l10 4" stroke="#200" stroke-width="3" stroke-dasharray="5 4" />
									<path d="M1031 382.500h13M1037.500 376v16" stroke="#8a9aff" stroke-width="2" />
									<path d="M595 528l8 2-6 3" fill="none" stroke="#d33" />
									<text x="1033" y="203">z'</text>
									<text x="902" y="327">y'</text>
									<text x="1184" y="333">x'</text>

									<!-- cursor brackets -->
									<path d="M1327.500 862v-6.500h7M1348 855.500h6.500v6.500M1327.500 875v7h7M1348 882h6.500v-7" fill="none" stroke="#c4c0c6" />
								</g>
							</svg>

							<div class="snap">
								<h2>Zeige... <button class="close" aria-label="Schließen"></button></h2>
								<div class="snaps">
									<button aria-label="Raster"><svg><use href="#snapgrid" /></svg></button>
									<button class="active" aria-label="Objekte"><svg><use href="#snapobj" /></svg></button>
									<button class="active" aria-label="Winkel"><svg><use href="#snapangle" /></svg></button>
									<button class="active" aria-label="Schnittpunkte"><svg><use href="#snapcross" /></svg></button>
									<button class="active" aria-label="Teilstücke"><svg><use href="#snapdist" /></svg></button>
									<button class="active" aria-label="Kanten"><svg><use href="#snapedge" /></svg></button>
									<button class="active" aria-label="Tangente"><svg><use href="#snaptan" /></svg></button>
									<button class="active" aria-label="Ebene"><svg><use href="#snapplane" /></svg></button>
								</div>
							</div>
						</div>
					</div>
				</div>
			</section>

			<aside class="info">
				<h2>Info - Daten <button class="help" aria-label="Hilfe">?</button><button class="close" aria-label="Schließen"></button></h2>
				<div class="infotabs">
					<a href="#">Objekt</a>
					<a href="#" class="current">Daten</a>
					<a href="#">Ren...</a>
					<i class="sep"></i>
					<button class="pill" aria-label="Mehr"></button>
				</div>
				<div class="infobody">
					<h3>Vorgabewerte</h3>
					<div class="dataset">
						<label for="dataset">Datenset:</label>
						<span class="combo soft"><select id="dataset" disabled><option>&lt;Standardeinstellung&gt;</option></select></span>
					</div>
					<div class="group">
						<h4>Datenbanken:</h4>
						<ul class="databases">
							<li><span>interiorcad sales info</span></li>
							<li>interiorcad woodendraw...</li>
						</ul>
						<button disabled>Datenbank verknüpfen...</button>
						<button disabled>IFC-Daten verknüpfen...</button>
						<button disabled>Verknüpfung entfernen...</button>
					</div>
					<div class="group fields">
						<label for="desc">Description:</label><input id="desc">
						<label for="supplier">Supplier:</label><input id="supplier" value="Stock">
						<label for="order">Order-Number:</label><input id="order">
						<label for="price">Price:</label><input id="price" value="0,00">
					</div>
					<div class="name">
						<label for="name">Name:</label><input id="name">
					</div>
				</div>
			</aside>
		</main>

		<div class="status">
			<strong>Rendervorgang abgeschlossen 1:53</strong>
			<span>CAP</span>
			<span class="on">NUM</span>
			<span>SCRL</span>
			<i class="tri right"></i>
			<svg class="grip" viewBox="0 0 12 14"><path d="M0 14L12 2M4 14l8-8M8 14l4-4" stroke="#888" /></svg>
		</div>

		<footer class="taskbar">
			<button aria-label="Start"><svg class="s16"><use href="#win" /></svg></button>
			<button aria-label="Taskansicht"><svg class="s16"><use href="#taskview" /></svg></button>
			<button class="open" aria-label="Explorer"><svg><use href="#explorer" /></svg></button>
			<button aria-label="Firefox"><svg><use href="#firefox" /></svg></button>
			<button class="open" aria-label="Outlook"><svg><use href="#outlook" /></svg></button>
			<button aria-label="Kurznotizen"><svg><use href="#notes" /></svg></button>
			<button aria-label="Spotify"><svg><use href="#spotify" /></svg></button>
			<button aria-label="Edge"><svg><use href="#edge" /></svg></button>
			<button class="front" aria-label="Vectorworks"><svg><use href="#vw" /></svg></button>
			<div class="tray">
				<svg class="weather"><use href="#cloudw" /></svg>
				<span class="temp">6°C&nbsp; Bewölkt</span>
				<svg viewBox="0 0 16 16"><path d="M3 11l5-5 5 5" fill="none" stroke="#fff" stroke-width="1.500" /></svg>
				<svg><use href="#meet" /></svg>
				<svg><use href="#onedrive" /></svg>
				<svg><use href="#battery" /></svg>
				<svg><use href="#wifi" /></svg>
				<svg><use href="#sound" /></svg>
				<svg><use href="#ink" /></svg>
				<time>14:40<br>22.01.2022</time>
				<span class="notify"><svg><use href="#note" /></svg><b>4</b></span>
			</div>
		</footer>

		<script src="ruler.js"></script>

	</body>

</html>
```
FILE: styles.css
```css
* {
	box-sizing: border-box;
	margin: 0;
	padding: 0;
}

body {
	display: flex;
	flex-direction: column;
	height: 100vh;
	overflow: hidden;
	background: #f0f0f0;
	color: #000;
	font: 12px "Open Sans", "Noto Sans", sans-serif;
}

button,
input,
select {
	border: none;
	background: none;
	color: inherit;
	font: 11px "Liberation Sans", Arial, sans-serif;
}

button {
	display: flex;
	align-items: center;
	justify-content: center;
	flex: none;
}

a {
	color: inherit;
	text-decoration: none;
}

ul {
	list-style: none;
}

svg {
	display: block;
	flex: none;
}

svg text {
	font-family: "Liberation Sans", Arial, sans-serif;
}

.sprite {
	position: absolute;
}

/* title and menu */
.titlebar {
	display: flex;
	align-items: center;
	flex: none;
	height: 23px;
	background: #fff;
}

.titlebar h1 {
	flex: 1;
	font: 12px Roboto, "Open Sans", sans-serif;
}

.logo {
	width: 16px;
	height: 16px;
	margin: 0 5px 0 2px;
}

.winbtns {
	display: flex;
	gap: 34px;
	padding-right: 19px;
}

.winbtns svg {
	width: 12px;
	height: 12px;
}

.menubar {
	display: flex;
	align-items: center;
	gap: 13px;
	flex: none;
	height: 29px;
	padding: 0 0 1px 4px;
}

.doc {
	width: 12px;
	height: 16px;
	margin-right: -2px;
}

.account {
	display: flex;
	align-items: center;
	gap: 14px;
	margin-left: auto;
}

.account .lock {
	width: 12px;
	height: 16px;
}

.bell {
	position: relative;
}

.bell svg {
	width: 20px;
	height: 18px;
}

.bell b {
	position: absolute;
	top: -2px;
	right: -2px;
	width: 12px;
	height: 12px;
	border-radius: 6px;
	background: #e11;
	color: #fff;
	font-size: 8px;
	line-height: 12px;
	text-align: center;
}

.docbtns {
	display: flex;
	align-self: flex-end;
	gap: 6px;
	margin-left: 24px;
	padding: 0 4px 4px 0;
}

.docbtns svg {
	width: 10px;
	height: 10px;
}

/* shared parts */
.workspace {
	display: flex;
	flex: 1;
	gap: 4px;
	min-height: 0;
}

h2 {
	display: flex;
	align-items: center;
	flex: none;
	height: 20px;
	padding: 0 6px 0 3px;
	border: 1px solid #a0a0a0;
	font-size: 12px;
	font-weight: normal;
}

.close,
.help {
	width: 9px;
	height: 12px;
}

h2 .close,
h2 .help {
	margin-left: auto;
}

h2 .help {
	font-weight: bold;
}

h2 .help + .close {
	margin-left: 10px;
}

.close,
.x {
	background: linear-gradient(45deg, transparent 42%, currentColor 42%, currentColor 58%, transparent 58%) center / 8px 8px no-repeat, linear-gradient(135deg, transparent 42%, currentColor 42%, currentColor 58%, transparent 58%) center / 8px 8px no-repeat;
}

.tri {
	width: 0;
	height: 0;
	border: 5px solid transparent;
	border-top-color: #000;
	border-bottom-width: 0;
}

.tri.left {
	border-width: 5px 10px 5px 0;
	border-color: transparent #000;
}

.tri.right {
	border-width: 5px 0 5px 10px;
	border-color: transparent #000;
}

.sep {
	flex: none;
	width: 1px;
	align-self: stretch;
	background: #aaa;
}

.pill {
	width: 24px;
	height: 13px;
	border-radius: 4px;
	background: #a0a0a0;
}

.pill::after {
	border: 4px solid transparent;
	border-left-color: #fff;
	border-right-width: 0;
	content: "";
}

.fold {
	width: 29px;
	height: 10px;
	margin: 2px auto 3px 85px;
	border-radius: 2px;
	background: #a0a0a0;
}

.fold::after {
	border: 5px solid transparent;
	border-top-color: #fff;
	border-bottom-width: 0;
	content: "";
}

/* left dock */
.dock {
	display: flex;
	flex-direction: column;
	flex: none;
	width: 201px;
}

.palette {
	display: flex;
	flex-direction: column;
	margin-bottom: 4px;
	border-bottom: 1px solid #a0a0a0;
}

.grow {
	flex: 1;
	min-height: 0;
}

.listbox {
	display: flex;
	flex: 1;
	min-height: 0;
	margin-top: 1px;
	overflow: hidden;
	background: #fff;
}

.listbox.short {
	flex: none;
	height: 168px;
}

.listbox ul {
	flex: 1;
}

.listbox li button {
	justify-content: flex-start;
	gap: 9px;
	width: 184px;
	height: 23px;
	padding-left: 3px;
}

.listbox li svg {
	width: 24px;
	height: 22px;
}

.listbox li .active {
	padding-left: 2px;
	border: 1px solid #1a7ac8;
	background: #d0e4f5;
}

.more::after {
	margin-left: auto;
	margin-right: 3px;
	border: 4px solid transparent;
	border-left: 5px solid #000;
	border-right-width: 0;
	content: "";
}

.scroll {
	display: flex;
	flex-direction: column;
	align-items: center;
	width: 16px;
	background: #f0f0f0;
}

.up,
.down {
	width: 6px;
	height: 6px;
	margin: 8px 0 4px;
	border: solid #555;
	border-width: 2px 0 0 2px;
	transform: rotate(45deg);
}

.down {
	margin: auto 0 6px;
	border-width: 0 2px 2px 0;
}

.thumb {
	width: 15px;
	height: 34px;
	background: #cdcdcd;
}

.thumb.long {
	height: 180px;
}

.groups {
	display: flex;
	flex-wrap: wrap;
	gap: 1px;
}

.groups button {
	width: 32px;
	height: 22px;
	border: 1px solid #999;
	background: linear-gradient(#eee, #ccc);
}

.groups svg {
	width: 28px;
	height: 20px;
}

.groups .active {
	border-color: #1a7ac8;
	background: linear-gradient(#5aa0d8, #cfe6f6);
}

/* attributes */
.attributes {
	margin: 0;
	border: none;
}

.attr {
	justify-content: flex-start;
	height: 22px;
	margin-top: 4px;
	padding-left: 2px;
}

.attr svg {
	width: 15px;
	height: 15px;
}

.attr span {
	flex: 1;
	text-align: center;
}

.attr::after {
	margin-right: 6px;
	border: 5px solid transparent;
	border-top-color: #000;
	border-bottom-width: 0;
	content: "";
}

.swatch {
	width: 14px;
	height: 14px;
	margin-left: 10px;
	border: 1px solid #000;
	background: #2a2a2a;
}

.fill {
	height: 37px;
	margin: 2px 3px 0 19px;
	border: 1px solid #000;
}

.white {
	background: #fff;
}

.black {
	background: #000;
}

.attributes p {
	height: 19px;
	font: 11px/19px "Liberation Sans", Arial, sans-serif;
}

.opacity {
	text-align: center;
}

.shadow {
	display: flex;
	align-items: center;
	padding-left: 26px;
}

.shadow input {
	width: 11px;
	height: 11px;
	margin: 0 30px 0 22px;
	border: 1px solid #333;
	background: #f4f4f4;
	box-shadow: 2px 2px 1px #999;
	appearance: none;
}

.weight {
	gap: 2px;
	height: 16px;
	margin: 3px 3px 0;
	padding: 0 3px;
	border: 1px solid #999;
	background: #fff;
}

.weight i {
	flex: 1;
	height: 2px;
	background: #000;
}

.ends {
	display: flex;
	align-items: center;
	justify-content: space-between;
	height: 20px;
	padding: 0 18px;
	border-bottom: 1px solid #a0a0a0;
}

.ends svg {
	width: 13px;
	height: 9px;
}

.attributes .fold {
	margin-top: 6px;
	margin-bottom: 2px;
}

/* document window */
.document {
	display: flex;
	flex-direction: column;
	flex: 1;
	min-width: 0;
	padding: 1px 3px 2px 2px;
	border: 1px solid #999;
}

.tabs {
	display: flex;
	align-items: flex-end;
	flex: none;
	height: 20px;
	margin: 0 -3px 0 -2px;
	padding-left: 3px;
	border-bottom: 1px solid #999;
	background: #f6f6f6;
}

.slant {
	width: 24px;
	height: 19px;
}

.tab {
	display: flex;
	align-items: center;
	height: 19px;
	padding-right: 4px;
	border: 1px solid #888;
	border-bottom: none;
	border-left: none;
	border-radius: 0 4px 0 0;
	background: #fff;
	font-size: 13px;
	font-weight: bold;
}

.tab .x {
	width: 8px;
	height: 10px;
	margin-left: 6px;
}

.tab.empty {
	width: 27px;
	border-radius: 4px 4px 0 0;
	background: #f0f0f0;
}

.tabs > .tri {
	margin: 0 6px 8px auto;
}

.sheet {
	display: flex;
	flex-direction: column;
	flex: 1;
	min-height: 0;
	margin-top: 1px;
	border: 1px solid #ddd;
	border-top: 1px solid #555;
	border-left: 1px solid #555;
}

.viewbar {
	display: flex;
	align-items: center;
	gap: 2px;
	flex: none;
	height: 26px;
	padding: 3px 6px 3px 5px;
	border-bottom: 1px solid #aaa;
}

.viewbar svg {
	width: 18px;
	height: 18px;
}

.viewbar .full svg {
	width: 20px;
}

.viewbar .sep {
	background: #999;
}

.b18 {
	width: 18px;
	height: 22px;
}

.b22 {
	width: 22px;
	height: 22px;
}

.b28 {
	width: 28px;
	height: 22px;
}

.spaced {
	margin-left: 6px;
}

.gapped {
	margin-left: 3px;
}

.viewbar .active,
.modebar .active {
	border: 1px solid #1a7ac8;
	background: #cfe5f6;
}

.combo {
	display: flex;
	flex: none;
	width: 130px;
	height: 17px;
	border: 1px solid #999;
	background: #fff;
}

.combo select {
	flex: 1;
	min-width: 0;
	padding-left: 4px;
	appearance: none;
}

.combo::after {
	width: 18px;
	border-left: 1px solid #999;
	background: conic-gradient(from -45deg at 50% 100%, #000 90deg, transparent 0) center / 9px 5px no-repeat;
	content: "";
}

.combo.soft::after {
	border: none;
	background: conic-gradient(from -45deg at 50% 100%, #000 90deg, transparent 0) center / 6px 3px no-repeat, #f0f0f0;
}

.zoom {
	width: 81px;
}

.render {
	width: 126px;
}

.viewbar input {
	height: 17px;
	padding-left: 2px;
	border: 1px solid #999;
	background: #fff;
}

.scale {
	width: 77px;
}

.angle {
	width: 50px;
}

.split {
	justify-content: space-around;
	width: 41px;
	height: 19px;
	border: 1px solid #999;
}

.split::after {
	border: 5px solid transparent;
	border-top-color: #000;
	border-bottom-width: 0;
	content: "";
}

.split.soft::after {
	border-width: 3px 3px 0;
}

.viewbar .pill,
.modebar .pill {
	margin-left: auto;
}

.modebar {
	display: flex;
	align-items: center;
	gap: 5px;
	flex: none;
	height: 31px;
	padding: 3px 6px 4px 5px;
}

.modebar button {
	width: 30px;
	height: 24px;
}

.modebar svg {
	width: 24px;
	height: 24px;
}

.modebar .active svg {
	height: 22px;
}

.modebar p {
	flex: 1;
	font: 11px "Liberation Sans", Arial, sans-serif;
	white-space: nowrap;
}

.modebar .sep {
	margin: 1px 2px;
}

.modebar .split {
	width: 43px;
}

.modebar .split svg {
	height: 20px;
}

.modebar .pill {
	width: 24px;
	height: 13px;
	margin-left: 17px;
}

.drawing {
	display: grid;
	grid-template-columns: 15px 1fr;
	grid-template-rows: 14px 1fr;
	flex: 1;
	min-height: 0;
	background: #fdfaff;
}

.drawing > svg,
.model {
	width: 100%;
	height: 100%;
}

.drawing > .corner {
	width: 12px;
	height: 12px;
}

.hruler {
	border-bottom: 1px solid #aaa;
}

.vruler {
	border-right: 1px solid #aaa;
}

.drawing > svg text {
	fill: #b4b4b4;
	font-size: 10px;
}

.canvas {
	position: relative;
	overflow: hidden;
}

.model {
	position: absolute;
}

/* floating snap palette */
.snap {
	position: absolute;
	top: 19px;
	left: 15px;
	width: 75px;
	padding: 1px;
	border: 2px solid #888;
	background: #f2f4f6;
}

.snap h2 {
	height: 23px;
	padding: 0 4px 0 2px;
	border: none;
	background: #888;
	color: #fff;
	font-weight: bold;
}

.snaps {
	display: grid;
	grid-template-columns: 1fr 1fr;
	row-gap: 5px;
	padding: 1px 1px 0;
}

.snaps button {
	height: 26px;
	border: 1px solid transparent;
}

.snaps .active {
	border-color: #1a7ac8;
	background: #d0e6f6;
}

.snaps svg {
	width: 24px;
	height: 24px;
}

/* info palette */
.info {
	display: flex;
	flex-direction: column;
	flex: none;
	width: 169px;
	border: 1px solid #999;
}

.info h2 {
	margin-top: -1px;
	margin-right: -1px;
	border-left: none;
}

.infotabs {
	display: flex;
	align-items: center;
	flex: none;
	height: 26px;
	padding: 2px 3px 0 5px;
}

.infotabs a {
	padding: 2px;
}

.infotabs .current {
	margin-right: 3px;
	padding: 2px 4px;
	border: 1px solid #fff;
	border-right: 1px solid #000;
	border-bottom: none;
}

.infotabs .sep {
	margin: 3px 0 3px auto;
}

.infotabs .pill {
	margin: 0 0 6px 5px;
}

.infobody {
	display: flex;
	flex-direction: column;
	flex: 1;
	min-height: 0;
	padding: 5px 1px 2px 2px;
	font: 11px "Liberation Sans", Arial, sans-serif;
}

.infobody h3 {
	height: 20px;
	padding-left: 3px;
	border: 1px solid #555;
	font: bold 13px/17px "Open Sans", sans-serif;
}

.dataset {
	display: flex;
	align-items: center;
	justify-content: space-between;
	height: 20px;
	margin: 4px 0;
	padding-left: 4px;
	color: #888;
}

.dataset .combo {
	width: 109px;
	height: 20px;
}

.dataset select {
	opacity: 1;
}

.dataset .combo::after {
	background: conic-gradient(from -45deg at 50% 100%, #aaa 90deg, transparent 0) center / 6px 3px no-repeat, #f0f0f0;
}

.group {
	padding: 4px 5px 3px;
	border: 1px solid #999;
}

.group h4 {
	height: 17px;
	font-weight: normal;
	line-height: 16px;
}

.databases {
	height: 77px;
	margin-bottom: 3px;
	padding: 2px 0 0 18px;
	border: 1px solid #ddd;
	border-top-color: #555;
	border-left-color: #555;
	background: #fff;
	white-space: nowrap;
}

.databases li {
	height: 17px;
	padding-left: 3px;
	line-height: 17px;
}

.databases span {
	display: block;
	width: 104px;
	background: #f0f0f0;
}

.group button {
	width: 100%;
	height: 20px;
	margin-bottom: 2px;
	border: 1px solid #aaa;
	color: #777;
}

.fields {
	display: grid;
	grid-template-columns: 74px 1fr;
	align-content: start;
	align-items: center;
	row-gap: 2px;
	flex: 1;
	margin-top: 3px;
	padding: 1px;
	padding-left: 5px;
}

.fields input,
.name input {
	width: 100%;
	height: 17px;
	padding-left: 3px;
	border: 1px solid #999;
	background: #fff;
}

.name {
	display: flex;
	align-items: center;
	gap: 5px;
	margin-top: 4px;
	padding-left: 3px;
	color: #888;
}

.name input {
	flex: 1;
	border-color: #555;
	background: none;
}

/* status bar */
.status {
	display: flex;
	align-items: center;
	justify-content: flex-end;
	gap: 3px;
	flex: none;
	height: 21px;
}

.status strong {
	margin-right: 2px;
	font-size: 13px;
}

.status span {
	height: 17px;
	padding: 0 2px;
	border: 1px solid #aaa;
	color: #888;
	font-size: 11px;
	line-height: 15px;
}

.status .on {
	color: #000;
}

.status .tri {
	margin-left: 4px;
	border-width: 3px 0 3px 4px;
}

.grip {
	align-self: flex-end;
	width: 12px;
	height: 14px;
}

/* taskbar */
.taskbar {
	display: flex;
	flex: none;
	height: 40px;
	background: linear-gradient(90deg, #22363f, #1f313e 60%, #1a2440 90%);
	color: #fff;
}

.taskbar button {
	width: 49px;
	background: linear-gradient(#76b9ed, #76b9ed) bottom / 0 2px no-repeat;
}

.taskbar button svg {
	width: 24px;
	height: 24px;
}

.taskbar button .s16 {
	width: 17px;
	height: 17px;
}

.taskbar .open {
	background-size: 40px 2px;
}

.taskbar .front {
	background-color: #4f5e65;
	background-size: 100% 2px;
}

.tray {
	display: flex;
	align-items: center;
	gap: 8px;
	margin-left: auto;
	padding-right: 22px;
}

.tray svg {
	width: 16px;
	height: 16px;
}

.tray .weather {
	width: 22px;
	height: 18px;
}

.temp {
	margin-right: 11px;
	font-size: 13px;
}

.tray time {
	margin: 0 13px 0 8px;
	font-size: 11px;
	line-height: 18px;
	text-align: center;
}

.notify {
	position: relative;
}

.notify b {
	position: absolute;
	top: 5px;
	left: 8px;
	width: 15px;
	height: 15px;
	border: 1px solid #999;
	border-radius: 8px;
	background: #333b48;
	font-size: 10px;
	line-height: 13px;
	text-align: center;
}
```
FILE: ruler.js
```js
var NS = "http://www.w3.org/2000/svg";
var STEP = 103.2;

function add(svg, name, attrs, text) {
	var el = document.createElementNS(NS, name);
	for(var key in attrs) {
		el.setAttribute(key, attrs[key]);
	}
	if(text !== undefined) {
		el.textContent = text;
	}
	svg.appendChild(el);
}

function tickLength(i) {
	if(i % 10 == 0) {
		return 14;
	}
	return i % 5 == 0 ? 5 : 3;
}

// origin: pixel of the zero mark inside the ruler
function drawHorizontal(svg, origin, mark) {
	add(svg, "rect", {x: mark - 2, y: 0, width: 5, height: 14, fill: "#ffff66"});
	add(svg, "path", {d: "M" + mark + " 0v14", stroke: "#888800"});
	for(var i = -78; i <= 68; i++) {
		var x = Math.round(origin + i * STEP / 10) + 0.5;
		add(svg, "path", {d: "M" + x + " 14v-" + tickLength(i), stroke: "#aaa"});
		if(i % 10 == 0) {
			add(svg, "text", {x: x + 3, y: 10}, Math.abs(i) * 20);
		}
	}
	add(svg, "text", {x: 0, y: 10}, "00");
}

function drawVertical(svg, origin, mark) {
	add(svg, "rect", {x: 0, y: mark - 2, width: 15, height: 5, fill: "#ffff66"});
	add(svg, "path", {d: "M0 " + mark + "h15", stroke: "#888800"});
	for(var i = -22; i <= 61; i++) {
		var y = Math.round(origin + i * STEP / 10) + 0.5;
		add(svg, "path", {d: "M15 " + y + "h-" + tickLength(i), stroke: "#aaa"});
		if(i % 10 == 0) {
			add(svg, "text", {transform: "translate(10 " + (y - 4) + ") rotate(-90)"}, Math.abs(i) * 20);
		}
	}
}

drawHorizontal(document.getElementById("hruler"), 813, 1117);
drawVertical(document.getElementById("vruler"), 235, 722);
add(document.getElementById("hruler"), "path", {d: "M813.5 0v14", stroke: "#aeaef2", "stroke-width": 3});
```
